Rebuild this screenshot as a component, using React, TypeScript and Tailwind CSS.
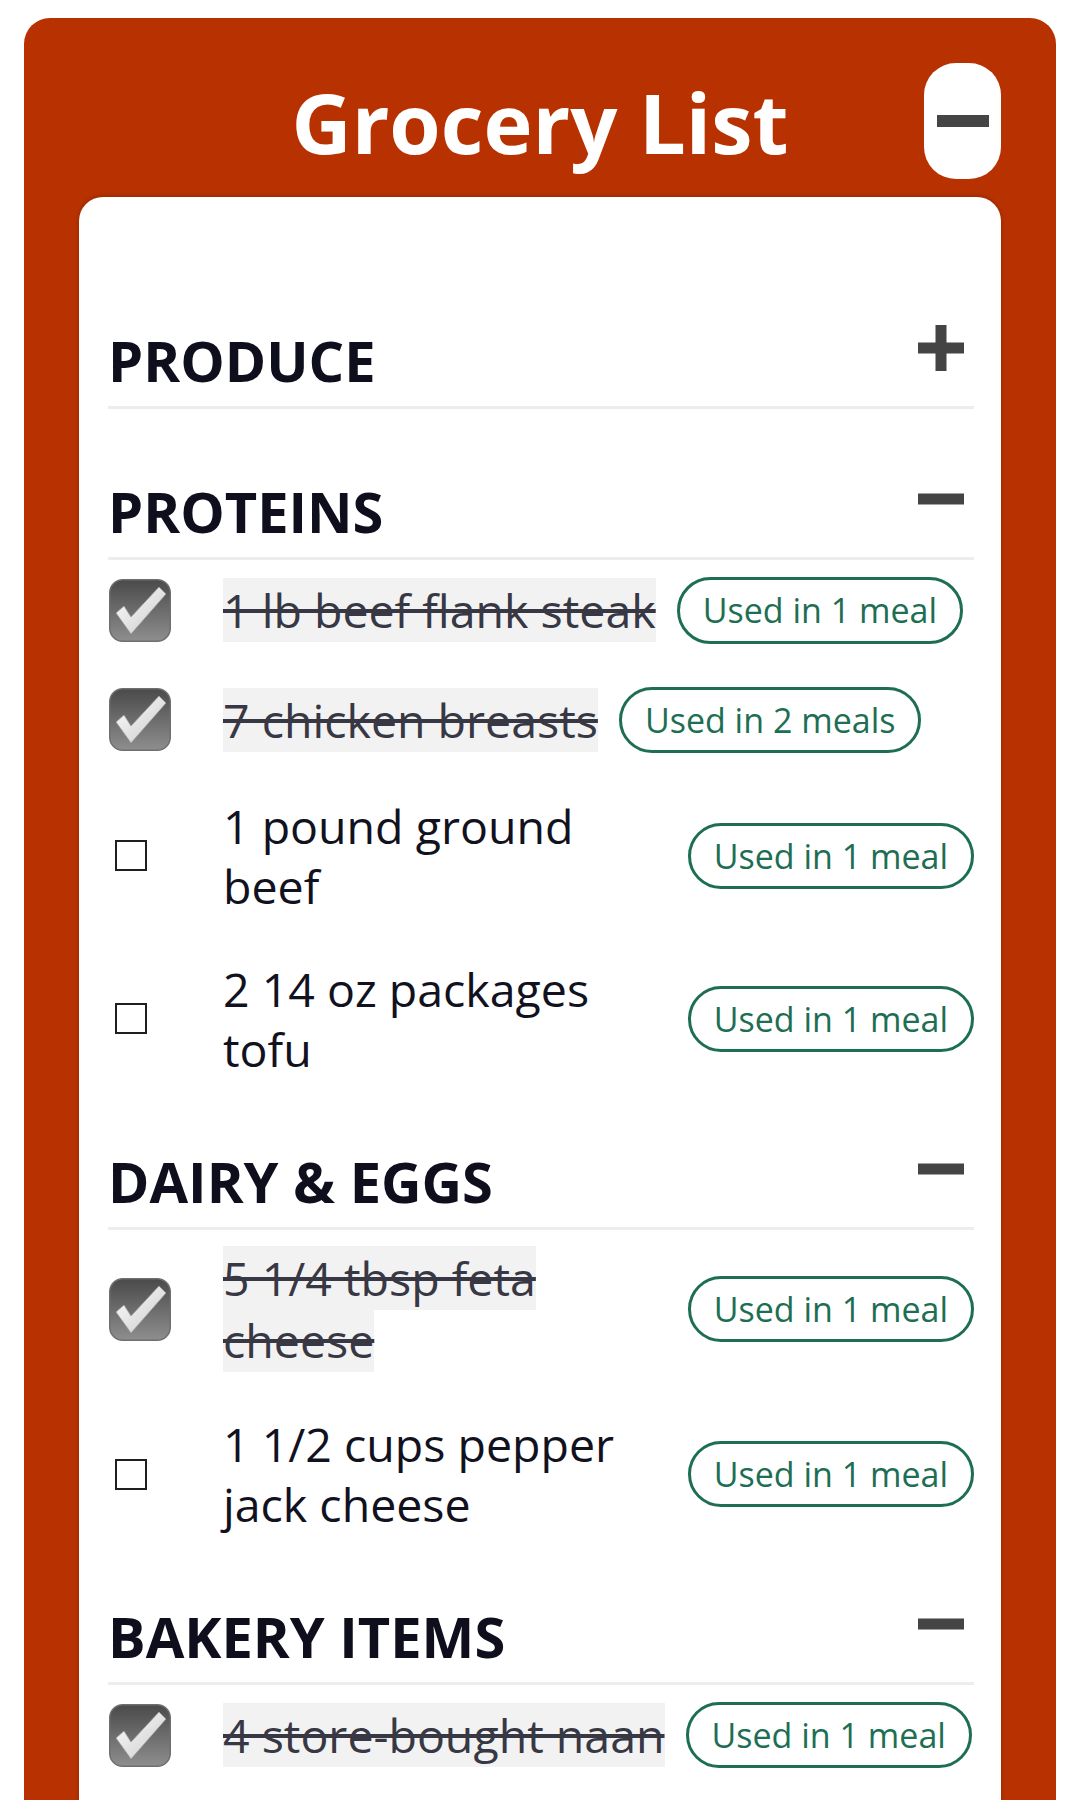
import React from "react";

type Item = { text: string; done: boolean; meals: number };
type Section = { name: string; open: boolean; items: Item[] };

const sections: Section[] = [
  { name: "PRODUCE", open: false, items: [] },
  {
    name: "PROTEINS",
    open: true,
    items: [
      { text: "1 lb beef flank steak", done: true, meals: 1 },
      { text: "7 chicken breasts", done: true, meals: 2 },
      { text: "1 pound ground beef", done: false, meals: 1 },
      { text: "2 14 oz packages tofu", done: false, meals: 1 },
    ],
  },
  {
    name: "DAIRY & EGGS",
    open: true,
    items: [
      { text: "5 1/4 tbsp feta cheese", done: true, meals: 1 },
      { text: "1 1/2 cups pepper jack cheese", done: false, meals: 1 },
    ],
  },
  {
    name: "BAKERY ITEMS",
    open: true,
    items: [{ text: "4 store-bought naan", done: true, meals: 1 }],
  },
];

const font = { fontFamily: '"Open Sans", "Noto Sans", sans-serif' };

function ToggleIcon({ open }: { open: boolean }) {
  return (
    <svg width="46" height="46" viewBox="0 0 46 46" className="shrink-0">
      <rect x="0" y="17.5" width="46" height="11" fill="#444444" />
      {!open && <rect x="17.5" y="0" width="11" height="46" fill="#444444" />}
    </svg>
  );
}

function CheckedBox() {
  return (
    <svg width="62" height="63" viewBox="0 0 62 63" className="ml-[1px]">
      <defs>
        <linearGradient id="boxFill" x1="0" y1="0" x2="0" y2="1">
          <stop offset="0" stopColor="#4a4a4a" />
          <stop offset="1" stopColor="#8e8e8e" />
        </linearGradient>
        <linearGradient id="tickFill" x1="0" y1="0" x2="1" y2="1">
          <stop offset="0" stopColor="#ffffff" />
          <stop offset="1" stopColor="#c9c9c9" />
        </linearGradient>
      </defs>
      <rect x="0.75" y="0.75" width="60.5" height="61.5" rx="13" fill="url(#boxFill)" stroke="#6f6f6f" strokeWidth="1.5" />
      <polygon
        points="7,34 15,27 22,38 50,8 57,15 22,55"
        fill="url(#tickFill)"
        stroke="#9a9a9a"
        strokeWidth="0.8"
        strokeLinejoin="round"
      />
    </svg>
  );
}

function EmptyBox() {
  return <div className="ml-[7px] h-[31px] w-[32px] border-2 border-[#1f1f1f] bg-white" />;
}

function Row({ item }: { item: Item }) {
  return (
    <div className="flex items-center">
      <div className="flex w-[115px] shrink-0 items-center">
        {item.done ? <CheckedBox /> : <EmptyBox />}
      </div>
      {item.done ? (
        <div className="min-w-0 text-[46.5px] leading-[62px]">
          <span className="bg-[#f2f2f2] text-[#383845] line-through decoration-[#383845]">{item.text}</span>
        </div>
      ) : (
        <div className="min-w-0 text-[46.5px] leading-[60px] text-[#12121f]">{item.text}</div>
      )}
      <div className="ml-[21px] shrink-0 whitespace-nowrap rounded-full border-[3px] border-[#1d6e53] px-[23px] py-[7px] text-[34px] leading-[1.36] text-[#1d6e53]">
        Used in {item.meals} {item.meals === 1 ? "meal" : "meals"}
      </div>
    </div>
  );
}

function SectionBlock({ section, first }: { section: Section; first: boolean }) {
  return (
    <section className={first ? "" : "mt-[69px]"}>
      <div className="flex items-start justify-between border-b-[3px] border-[#ededed] pb-3">
        <h2 className="text-[56px] font-bold leading-[1.2] text-[#0e0e1d]">{section.name}</h2>
        <div className="mr-[10px] mt-[-2px]">
          <ToggleIcon open={section.open} />
        </div>
      </div>
      {section.open && (
        <div className="flex flex-col gap-[43px] pt-[17px]">
          {section.items.map((item) => (
            <Row key={item.text} item={item} />
          ))}
        </div>
      )}
    </section>
  );
}

export default function App() {
  return (
    <div className="h-[1800px] overflow-hidden bg-white px-[24px] pt-[18px]" style={font}>
      <div className="rounded-[26px] bg-[#b73200] px-[55px] pb-[200px] pt-[45px]">
        <div className="grid grid-cols-[1fr_auto_1fr] items-center">
          <div />
          <h1 className="text-[83px] font-bold leading-[normal] text-white">Grocery List</h1>
          <button className="flex h-[116px] w-[77px] items-center justify-center justify-self-end rounded-[32px] bg-white">
            <span className="block h-[12px] w-[52px] bg-[#454545]" />
          </button>
        </div>
        <div className="mt-[18px] rounded-[24px] bg-white pb-[200px] pl-[29px] pr-[27px] pt-[130px] shadow-[0_-1px_4px_rgba(0,0,0,0.2)]">
          {sections.map((s, i) => (
            <SectionBlock key={s.name} section={s} first={i === 0} />
          ))}
        </div>
      </div>
    </div>
  );
}
